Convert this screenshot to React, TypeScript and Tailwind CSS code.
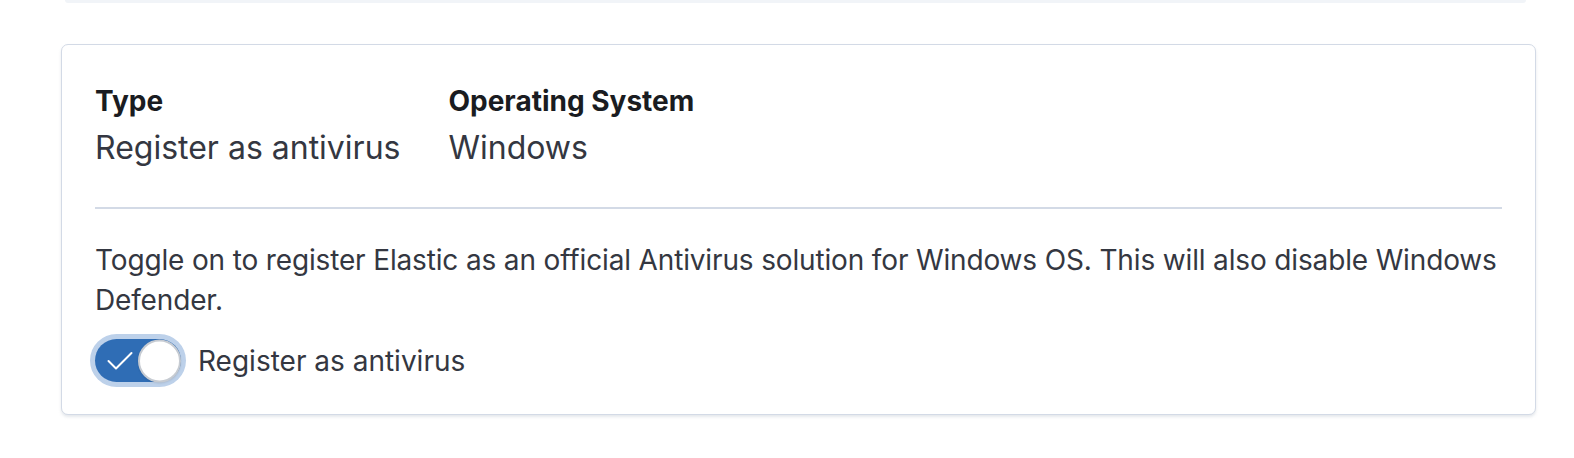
import React from "react";

const App = () => {
  return (
    <div className="min-h-screen bg-white font-['Inter',sans-serif] text-[#343741]">
      <div className="ml-[65px] mr-[48px] h-[3px] rounded-b bg-[#f1f4f8]" />
      <div className="pl-[61px] pr-[38px] pt-[41px]">
        <div className="rounded-[7px] border border-[#d3dae6] bg-white px-[33px] pt-[36px] pb-[32px] shadow-[0_2px_3px_rgba(152,162,179,0.25)]">
          <dl className="flex gap-[48px]">
            <div>
              <dt className="text-[28px] font-bold leading-[40px] text-[#1a1c21]">
                Type
              </dt>
              <dd className="mt-[3px] text-[32px] leading-[48px]">Register as antivirus</dd>
            </div>
            <div>
              <dt className="text-[28px] font-bold leading-[40px] text-[#1a1c21]">
                Operating System
              </dt>
              <dd className="mt-[3px] text-[32px] leading-[48px]">Windows</dd>
            </div>
          </dl>
          <div className="mt-[35px] mb-[31px] h-[2px] bg-[#d3dae6]" />
          <p className="text-[28px] leading-[40px] tracking-[-0.15px]">
            Toggle on to register Elastic as an official Antivirus solution for
            Windows OS. This will also disable Windows Defender.
          </p>
          <div className="mt-[19px] flex items-center gap-[17px]">
            <button
              type="button"
              role="switch"
              aria-checked="true"
              className="relative flex h-[43px] w-[86px] items-center rounded-full bg-[#2f6db5] ring-[5px] ring-[#bdd1ea]"
            >
              <svg
                className="absolute left-[12px] top-1/2 h-[20px] w-[26px] -translate-y-1/2"
                viewBox="0 0 26 20"
                fill="none"
              >
                <path
                  d="M1.5 10 9 17.5 24.5 2"
                  stroke="white"
                  strokeWidth="2"
                  strokeLinecap="round"
                  strokeLinejoin="round"
                />
              </svg>
              <span className="absolute right-0 top-1/2 h-[43px] w-[43px] -translate-y-1/2 rounded-full border-2 border-[#c6cbd2] bg-white shadow-[0_1px_2px_rgba(0,0,0,0.1)]" />
            </button>
            <span className="text-[28px] leading-[40px]">Register as antivirus</span>
          </div>
        </div>
      </div>
    </div>
  );
};

export default App;
